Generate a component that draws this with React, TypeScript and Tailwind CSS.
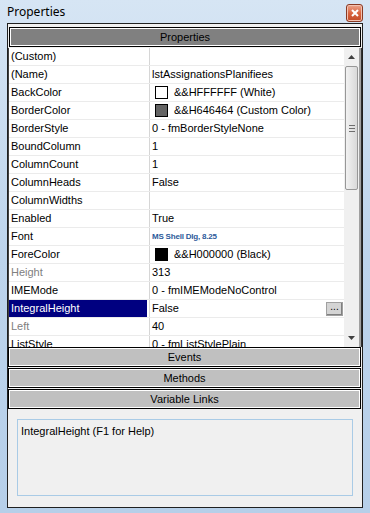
import React from "react";

type Row = {
  name: string;
  value?: string;
  swatch?: string;
  dim?: boolean;
  selected?: boolean;
  tiny?: boolean;
};

const rows: Row[] = [
  { name: "(Custom)" },
  { name: "(Name)", value: "lstAssignationsPlanifiees" },
  { name: "BackColor", value: "&&HFFFFFF (White)", swatch: "#ffffff" },
  { name: "BorderColor", value: "&&H646464 (Custom Color)", swatch: "#646464" },
  { name: "BorderStyle", value: "0 - fmBorderStyleNone" },
  { name: "BoundColumn", value: "1" },
  { name: "ColumnCount", value: "1" },
  { name: "ColumnHeads", value: "False" },
  { name: "ColumnWidths" },
  { name: "Enabled", value: "True" },
  { name: "Font", value: "MS Shell Dlg, 8.25", tiny: true },
  { name: "ForeColor", value: "&&H000000 (Black)", swatch: "#000000" },
  { name: "Height", value: "313", dim: true },
  { name: "IMEMode", value: "0 - fmIMEModeNoControl" },
  { name: "IntegralHeight", value: "False", selected: true },
  { name: "Left", value: "40", dim: true },
  { name: "ListStyle", value: "0 - fmListStylePlain" },
];

function PanelButton({ label, dark }: { label: string; dark?: boolean }) {
  return (
    <div
      className={`flex h-[20px] items-center justify-center border border-black text-[11px] text-black shadow-[inset_1px_1px_0_#ffffff,inset_-1px_-1px_0_#ffffff] ${
        dark ? "bg-[#808080]" : "bg-[#c0c0c0]"
      }`}
    >
      {label}
    </div>
  );
}

function Scrollbar() {
  return (
    <div className="flex w-[15px] flex-col items-center bg-[#f0f0f0]">
      <div className="flex h-[18px] w-full items-center justify-center">
        <svg width="7" height="4" viewBox="0 0 7 4">
          <path d="M0 4 L3.5 0 L7 4 Z" fill="#404040" />
        </svg>
      </div>
      <div className="flex h-[124px] w-[13px] flex-col items-center justify-center gap-[2px] rounded-[2px] border border-[#979797] bg-gradient-to-r from-[#f2f2f2] to-[#d9d9d9]">
        <div className="h-px w-[6px] bg-[#6e6e6e]" />
        <div className="h-px w-[6px] bg-[#6e6e6e]" />
        <div className="h-px w-[6px] bg-[#6e6e6e]" />
      </div>
      <div className="flex-1" />
      <div className="flex h-[18px] w-full items-center justify-center">
        <svg width="7" height="4" viewBox="0 0 7 4">
          <path d="M0 0 L3.5 4 L7 0 Z" fill="#404040" />
        </svg>
      </div>
    </div>
  );
}

function PropertyRow({ row }: { row: Row }) {
  return (
    <div className="flex h-[18px] shrink-0 border-b border-[#ebebeb]">
      <div className="flex w-[140px] shrink-0 pr-[2px]">
        <div
          className={`flex flex-1 items-center pl-[2px] ${
            row.selected ? "bg-[#000080] text-white" : row.dim ? "text-[#808080]" : "text-black"
          }`}
        >
          {row.name}
        </div>
      </div>
      <div className="flex flex-1 items-center border-l border-[#d6d6d6] pl-[2px] text-black">
        {row.swatch && (
          <span
            className="mr-[6px] ml-[3px] h-[13px] w-[13px] border border-black"
            style={{ backgroundColor: row.swatch }}
          />
        )}
        {row.tiny ? (
          <span className="text-[8px] font-bold tracking-[-0.2px] text-[#2c5a9a]">{row.value}</span>
        ) : (
          <span className="whitespace-nowrap">{row.value}</span>
        )}
        {row.selected && (
          <span className="mr-[1px] ml-auto flex h-[14px] w-[17px] items-center justify-center border border-[#a0a0a0] bg-[#d4d4d4] pb-[4px] text-[10px] leading-none shadow-[inset_-1px_-1px_0_#808080]">
            ...
          </span>
        )}
      </div>
    </div>
  );
}

export default function App() {
  return (
    <div
      className="flex h-[513px] w-[370px] flex-col overflow-hidden bg-gradient-to-b from-[#d6e5f4] via-[#bdd4ec] to-[#b6cfe9]"
      style={{ fontFamily: '"Liberation Sans", Arial, sans-serif' }}
    >
      <div className="flex h-[23px] shrink-0 items-center justify-between pr-[7px] pl-[7px]">
        <span className="text-[12px] text-black" style={{ fontFamily: '"Noto Sans", sans-serif' }}>
          Properties
        </span>
        <div className="mt-[2px] flex h-[18px] w-[17px] items-center justify-center rounded-[3px] border border-[#8a3a24] bg-gradient-to-b from-[#eba58e] via-[#d9643f] to-[#c24a25] shadow-[inset_0_0_0_1px_#f3c2b0]">
          <svg width="8" height="8" viewBox="0 0 8 8">
            <path d="M1 1 L7 7 M7 1 L1 7" stroke="#ffffff" strokeWidth="2" />
          </svg>
        </div>
      </div>

      <div className="mx-[7px] flex h-[485px] shrink-0 flex-col border border-[#202020] bg-[#f0f0f0] text-[11px]">
        <div className="px-[1px] pt-[3px] pb-[1px]">
          <PanelButton label="Properties" dark />
        </div>

        <div className="flex h-[299px] shrink-0 border-l border-[#404040] bg-white">
          <div className="flex flex-1 flex-col overflow-hidden">
            {rows.map((r) => (
              <PropertyRow key={r.name} row={r} />
            ))}
          </div>
          <Scrollbar />
          <div className="w-[2px] bg-[#a0a0a0]" />
          <div className="w-px bg-[#303030]" />
        </div>

        <div className="flex flex-col gap-[1px] pr-[1px]">
          <PanelButton label="Events" />
          <PanelButton label="Methods" />
          <PanelButton label="Variable Links" />
        </div>

        <div className="px-[9px] pt-[10px]">
          <div className="h-[77px] border border-[#a9cbe6] bg-[#f0f0f0] px-[3px] pt-[3px] text-black">
            IntegralHeight (F1 for Help)
          </div>
        </div>
      </div>
    </div>
  );
}
